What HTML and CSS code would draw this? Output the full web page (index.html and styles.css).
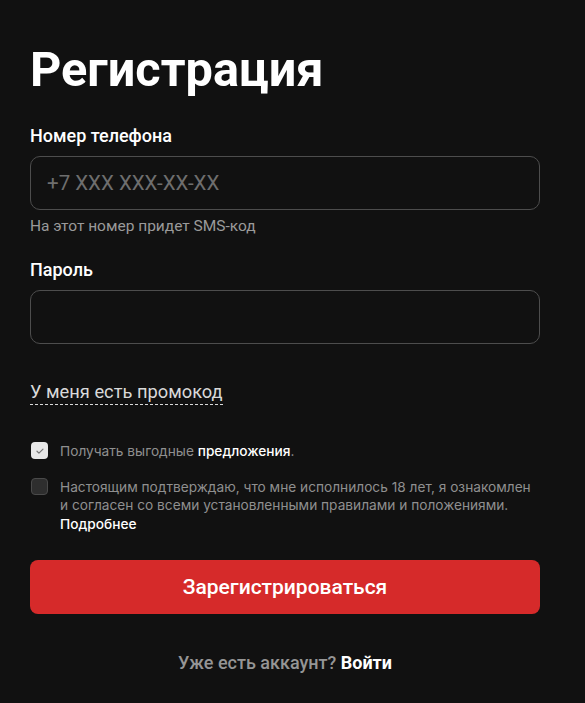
FILE: index.html
```html
<!DOCTYPE html>
<html lang="ru">
<head>
<meta charset="utf-8">
<link rel="stylesheet" href="styles.css">
</head>
<body>
<main class="page">
  <h1 class="title">Регистрация</h1>
  <div class="field">
    <label class="label">Номер телефона</label>
    <div class="input"><span class="placeholder">+7 XXX XXX-XX-XX</span></div>
    <div class="hint">На этот номер придет SMS-код</div>
  </div>
  <div class="field field-pass">
    <label class="label">Пароль</label>
    <div class="input"></div>
  </div>
  <div class="promo"><span class="promo-link">У меня есть промокод</span></div>
  <div class="checks">
    <div class="check">
      <span class="box box-on"><svg viewBox="0 0 16 16" width="12" height="12"><path d="M4 8.3l2.6 2.5L12 5.5" fill="none" stroke="#777" stroke-width="1.6" stroke-linecap="round" stroke-linejoin="round"/></svg></span>
      <span class="check-text">Получать выгодные <b class="strong">предложения</b>.</span>
    </div>
    <div class="check">
      <span class="box box-off"></span>
      <span class="check-text">Настоящим подтверждаю, что мне исполнилось 18 лет, я ознакомлен и согласен со всеми установленными правилами и положениями.<br><b class="strong more">Подробнее</b></span>
    </div>
  </div>
  <button class="btn">Зарегистрироваться</button>
  <div class="login">Уже есть аккаунт? <b class="login-link">Войти</b></div>
</main>
</body>
</html>
```
FILE: styles.css
```css
html, body {
  margin: 0;
  padding: 0;
  background: #111111;
}
body {
  font-family: Roboto, "Liberation Sans", sans-serif;
  color: #fff;
  width: 585px;
  height: 703px;
  overflow: hidden;
}
.page {
  padding: 36px 45px 0 30px;
  display: flex;
  flex-direction: column;
}
.title {
  margin: 0;
  font-size: 48.7px;
  font-weight: 700;
  line-height: 68px;
  letter-spacing: 0;
}
.field {
  display: flex;
  flex-direction: column;
  margin-top: 21px;
}
.field-pass {
  margin-top: 23px;
}
.label {
  font-size: 18px;
  font-weight: 500;
  line-height: 22px;
  margin-bottom: 9px;
}
.input {
  box-sizing: border-box;
  height: 54px;
  border: 1px solid #4d4d4d;
  border-radius: 10px;
  display: flex;
  align-items: center;
  padding-left: 16px;
}
.placeholder {
  font-size: 20.5px;
  color: #6e6e6e;
}
.hint {
  margin-top: 6px;
  font-size: 15.5px;
  color: #9a9a9a;
  line-height: 20px;
}
.promo {
  margin-top: 37px;
}
.promo-link {
  font-size: 18.3px;
  color: #d9d9d9;
  line-height: 22px;
  border-bottom: 1px dashed #d9d9d9;
  padding-bottom: 2px;
}
.checks {
  margin-top: 39px;
  display: flex;
  flex-direction: column;
  gap: 17px;
}
.check {
  display: flex;
  gap: 12px;
  align-items: flex-start;
}
.box {
  flex: none;
  width: 17px;
  height: 17px;
  border-radius: 4px;
  box-sizing: border-box;
  display: flex;
  align-items: center;
  justify-content: center;
  margin-left: 1px;
}
.box-on {
  background: #e8e8e8;
}
.box-off {
  background: #2e2e2e;
  border: 1px solid #4a4a4a;
}
.check-text {
  font-family: Inter, Roboto, sans-serif;
  font-size: 13.7px;
  line-height: 18.5px;
  color: #8f8f8f;
}
.strong {
  color: #fff;
  font-weight: 500;
}
.more {
  display: inline-block;
  margin-top: 0;
}
.btn {
  margin-top: 27px;
  height: 54px;
  border: none;
  border-radius: 8px;
  background: #d62a2a;
  color: #fff;
  font-family: Roboto, "Liberation Sans", sans-serif;
  font-size: 21px;
  font-weight: 500;
}
.login {
  margin-top: 38px;
  text-align: center;
  font-size: 18px;
  color: #959595;
  font-weight: 500;
}
.login-link {
  color: #fff;
  font-weight: 700;
}
```
